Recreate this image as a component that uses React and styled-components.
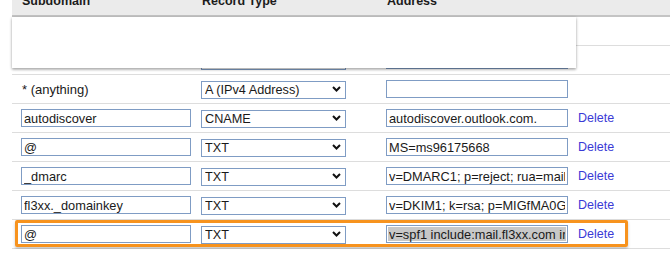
import styled, { createGlobalStyle } from 'styled-components'

const GlobalStyle = createGlobalStyle`
  html, body {
    margin: 0;
    padding: 0;
    background: #ffffff;
    font-family: "Liberation Sans", Arial, sans-serif;
    color: #1a1a1a;
    overflow: hidden;
  }
`

// the first two rows sit under the popup, only their edges show
const records = [
  { sub: '', plain: true, type: '', address: '' },
  { sub: '', plain: true, type: '', address: '' },
  { sub: '* (anything)', plain: true, type: 'A (IPv4 Address)', address: '' },
  { sub: 'autodiscover', type: 'CNAME', address: 'autodiscover.outlook.com.', del: true },
  { sub: '@', type: 'TXT', address: 'MS=ms96175668', del: true },
  { sub: '_dmarc', type: 'TXT', address: 'v=DMARC1; p=reject; rua=mailto:dmarc@fl3xx.com', del: true },
  { sub: 'fl3xx._domainkey', type: 'TXT', address: 'v=DKIM1; k=rsa; p=MIGfMA0GCSqGSIb3DQEB', del: true },
  { sub: '@', type: 'TXT', address: 'v=spf1 include:mail.fl3xx.com include:spf.protection.outlook.com -all', del: true, marked: true },
]

function Chevron() {
  return (
    <ChevronIcon width="9" height="6" viewBox="0 0 9 6">
      <path d="M1 1 L4.5 4.5 L8 1" fill="none" stroke="#111" strokeWidth="2" />
    </ChevronIcon>
  )
}

function App() {
  return (
    <>
      <GlobalStyle />
      <Table>
        <Header>
          <HeadCell>Subdomain</HeadCell>
          <HeadCell>Record Type</HeadCell>
          <HeadCell>Address</HeadCell>
        </Header>
        {records.map((r, i) => (
          <Row key={i}>
            {r.plain ? <Plain>{r.sub}</Plain> : <Field $w={170} value={r.sub} readOnly />}
            <SelectWrap>
              <Select value={r.type} onChange={() => {}}>
                <option value=""></option>
                <option>A (IPv4 Address)</option>
                <option>CNAME</option>
                <option>TXT</option>
              </Select>
              <Chevron />
            </SelectWrap>
            <Field $w={182} $selected={r.marked} value={r.address} readOnly />
            {r.del ? <DeleteLink href="#">Delete</DeleteLink> : <span />}
            {r.marked && <Highlight />}
          </Row>
        ))}
        <Popup />
      </Table>
    </>
  )
}

export default App

const Table = styled.div`
  position: relative;
  margin-left: 12px;
  width: calc(100% - 12px);
`

const Header = styled.div`
  display: grid;
  grid-template-columns: 180px 185px 192px 1fr;
  align-items: start;
  height: 15px;
  padding-left: 10px;
  background: #ebebeb;
  border-bottom: 2px solid #c4c4c4;
`

const HeadCell = styled.div`
  margin-top: -6px;
  font-size: 12.5px;
  line-height: 14px;
  font-weight: bold;
  color: #1c1c1c;
`

const Row = styled.div`
  position: relative;
  display: grid;
  grid-template-columns: 180px 185px 192px 1fr;
  align-items: center;
  box-sizing: border-box;
  height: 29px;
  padding-left: 9px;
  border-bottom: 1px solid #dddddd;
`

const Plain = styled.div`
  font-size: 13px;
  padding-left: 1px;
  color: #1a1a1a;
`

const Field = styled.input`
  box-sizing: border-box;
  width: ${p => p.$w}px;
  height: 18px;
  margin: 0;
  padding: 0 2px;
  border: 1px solid #7f9cc4;
  border-radius: 0;
  background: ${p => (p.$selected ? '#c8c8c8' : '#ffffff')};
  box-shadow: ${p => (p.$selected ? 'inset 0 0 0 1px #ffffff' : 'none')};
  font-family: "Liberation Sans", Arial, sans-serif;
  font-size: 12.8px;
  color: #1a1a1a;
  outline: none;
`

const SelectWrap = styled.div`
  position: relative;
  width: 145px;
  height: 18px;
`

const Select = styled.select`
  appearance: none;
  box-sizing: border-box;
  width: 145px;
  height: 18px;
  margin: 0;
  padding: 0 0 0 3px;
  border: 1px solid #7f9cc4;
  border-radius: 0;
  background: #ffffff;
  font-family: "Liberation Sans", Arial, sans-serif;
  font-size: 12.7px;
  color: #1a1a1a;
  outline: none;
`

const ChevronIcon = styled.svg`
  position: absolute;
  right: 5px;
  top: 6px;
  pointer-events: none;
`

const DeleteLink = styled.a`
  font-size: 12.5px;
  color: #3a3ad6;
  text-decoration: none;
`

const Highlight = styled.div`
  position: absolute;
  left: 3px;
  top: 0;
  box-sizing: border-box;
  width: 613px;
  height: 27px;
  border: 3px solid #f7931e;
  border-radius: 2px;
  box-shadow: 0 2px 3px rgba(0, 0, 0, 0.22);
  pointer-events: none;
`

const Popup = styled.div`
  position: absolute;
  left: 0;
  top: 17px;
  width: 564px;
  height: 51px;
  background: #ffffff;
  box-shadow: 0 1px 3px rgba(0, 0, 0, 0.3), 0 2px 2px rgba(0, 0, 0, 0.12);
`
